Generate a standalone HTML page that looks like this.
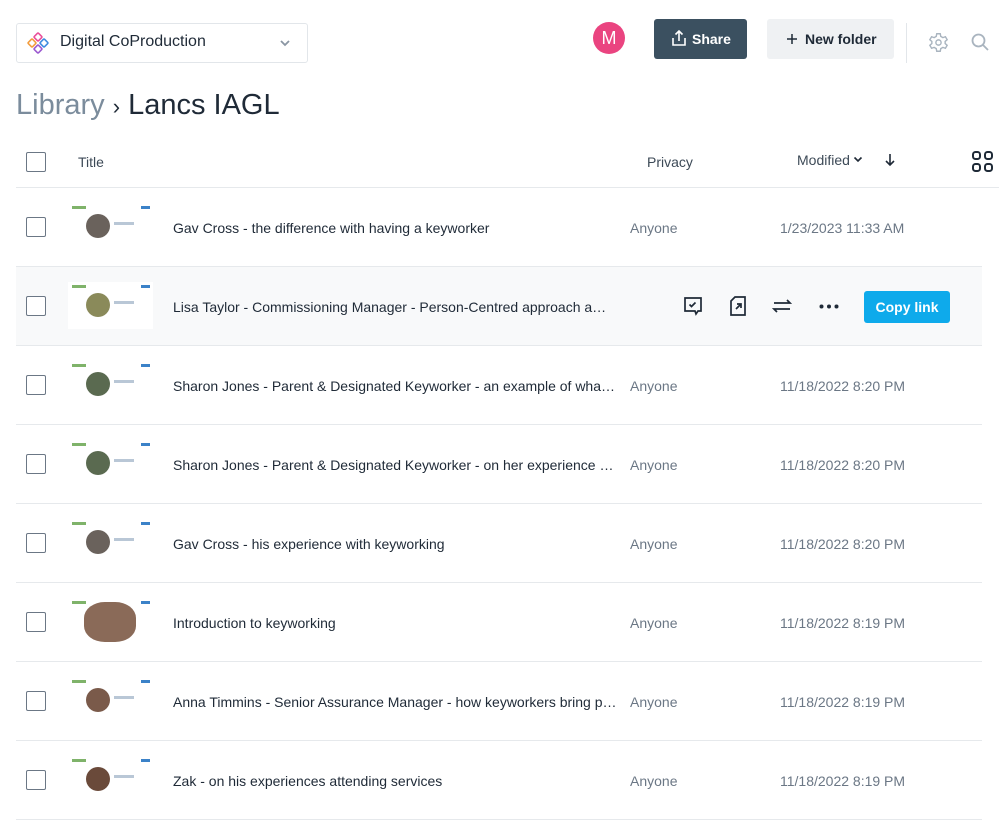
<!DOCTYPE html>
<html><head><style>
*{box-sizing:border-box;margin:0;padding:0}
body{width:1005px;height:821px;background:#fff;font-family:"Liberation Sans",Arial,sans-serif;color:#1f2a37;position:relative;overflow:hidden}
.abs{position:absolute}
.sel{left:16px;top:23px;width:292px;height:40px;border:1px solid #e2e6ea;border-radius:3px}
.cb{position:absolute;left:26px;width:20px;height:20px;border:1.5px solid #6b7785;border-radius:2px;background:#fff}
.row{position:absolute;left:16px;width:966px;height:79px;border-bottom:1px solid #e6e9ec}
.thumb{position:absolute;left:52px;top:15px;width:85px;height:47px;background:#fff}
.thumb:before{content:"";position:absolute;left:4px;top:3px;width:14px;height:3px;background:#7fb36a}
.thumb:after{content:"";position:absolute;right:3px;top:3px;width:9px;height:3px;background:#3b82c8}
.av{position:absolute;left:18px;top:11px;width:24px;height:24px;border-radius:50%}
.av+i{position:absolute;left:46px;top:19px;width:20px;height:3px;background:#b9c7d6}
.title{position:absolute;left:157px;top:32px;font-size:14px;color:#1f2a37;white-space:nowrap;width:445px;overflow:hidden;text-overflow:ellipsis}
.priv{position:absolute;left:614px;top:32px;font-size:14px;color:#6b7785}
.date{position:absolute;left:764px;top:32px;font-size:14px;color:#6b7785}
</style></head><body>
<div class="abs sel">
<svg class="abs" style="left:10px;top:8px" width="22" height="22" viewBox="0 0 22 22" fill="none" stroke-width="1.6"><rect x="8" y="2" width="6" height="6" rx="1" transform="rotate(45 11 5)" stroke="#e94e9a"/><rect x="2" y="8" width="6" height="6" rx="1" transform="rotate(45 5 11)" stroke="#f39c3c"/><rect x="14" y="8" width="6" height="6" rx="1" transform="rotate(45 17 11)" stroke="#3d8be0"/><rect x="8" y="14" width="6" height="6" rx="1" transform="rotate(45 11 17)" stroke="#9b59d0"/></svg>
<div class="abs" style="left:43px;top:9px;font-size:16px;color:#1f2a37">Digital CoProduction</div>
<svg class="abs" style="left:262px;top:15px" width="12" height="8" viewBox="0 0 12 8"><path d="M2 2l4 4 4-4" stroke="#8a96a3" stroke-width="1.8" fill="none"/></svg>
</div>
<div class="abs" style="left:593px;top:22px;width:32px;height:32px;border-radius:50%;background:#ea4480;color:#fff;font-size:18px;text-align:center;line-height:32px">M</div>
<div class="abs" style="left:654px;top:19px;width:93px;height:40px;background:#3b5060;border-radius:3px;color:#fff;font-weight:bold;font-size:14px;line-height:40px;padding-left:38px">Share</div>
<svg class="abs" style="left:671px;top:29px" width="16" height="18" viewBox="0 0 16 18" fill="none" stroke="#fff" stroke-width="1.6"><path d="M8 12V2M4.5 5.5L8 2l3.5 3.5M2 9v7h12V9"/></svg>
<div class="abs" style="left:767px;top:19px;width:127px;height:40px;background:#eff1f3;border-radius:3px;color:#1f2a37;font-weight:bold;font-size:14px;line-height:40px;padding-left:38px">New folder</div>
<svg class="abs" style="left:786px;top:33px" width="12" height="12" viewBox="0 0 12 12" stroke="#1f2a37" stroke-width="1.5"><path d="M6 1v10M1 6h10"/></svg>
<div class="abs" style="left:906px;top:23px;width:1px;height:40px;background:#e2e6ea"></div>
<svg class="abs" style="left:928px;top:32px" width="21" height="21" viewBox="0 0 24 24" fill="none" stroke="#a9b4bf" stroke-width="1.6"><circle cx="12" cy="12" r="3"/><path d="M10 2h4l.6 3 2.4 1.4 2.9-1 2 3.4-2.3 2v2.4l2.3 2-2 3.4-2.9-1L14.6 19 14 22h-4l-.6-3-2.4-1.4-2.9 1-2-3.4 2.3-2v-2.4l-2.3-2 2-3.4 2.9 1L9.4 5z"/></svg>
<svg class="abs" style="left:970px;top:32px" width="20" height="20" viewBox="0 0 20 20" fill="none" stroke="#a9b4bf" stroke-width="1.8"><circle cx="8.5" cy="8.5" r="6"/><path d="M13 13l5 5"/></svg>
<div class="abs" style="left:16px;top:89px;font-size:29px;color:#7b8c9c">Library <span style="color:#1f2a37;font-size:22px">›</span> <span style="color:#1f2a37">Lancs IAGL</span></div>
<div class="cb" style="top:152px"></div>
<div class="abs" style="left:78px;top:154px;font-size:14px;color:#3d4a57">Title</div>
<div class="abs" style="left:647px;top:154px;font-size:14px;color:#3d4a57">Privacy</div>
<div class="abs" style="left:797px;top:152px;font-size:14px;color:#3d4a57">Modified</div>
<svg class="abs" style="left:853px;top:156px" width="10" height="7" viewBox="0 0 10 7"><path d="M1.5 1.5L5 5l3.5-3.5" stroke="#1f2a37" stroke-width="1.6" fill="none"/></svg>
<svg class="abs" style="left:884px;top:153px" width="12" height="14" viewBox="0 0 12 14" fill="none" stroke="#1f2a37" stroke-width="1.6"><path d="M6 1v11M2 8l4 4 4-4"/></svg>
<svg class="abs" style="left:972px;top:151px" width="21" height="21" viewBox="0 0 21 21" fill="none" stroke="#1f2a37" stroke-width="2"><rect x="1" y="1" width="7" height="7" rx="2.5"/><rect x="13" y="1" width="7" height="7" rx="2.5"/><rect x="1" y="13" width="7" height="7" rx="2.5"/><rect x="13" y="13" width="7" height="7" rx="2.5"/></svg>
<div class="abs" style="left:16px;top:187px;width:983px;height:1px;background:#e6e9ec"></div>

<div class="row" style="top:188px"><div class="thumb"><div class="av" style="background:#6a625c"></div><i></i></div><div class="title">Gav Cross - the difference with having a keyworker</div><div class="priv">Anyone</div><div class="date">1/23/2023 11:33 AM</div></div>
<div class="row" style="top:267px;background:#f8f9fa"><div class="thumb"><div class="av" style="background:#8a8a5a"></div><i></i></div><div class="title" style="width:440px">Lisa Taylor - Commissioning Manager - Person-Centred approach and keyworking</div>
<svg class="abs" style="left:667px;top:29px" width="20" height="20" viewBox="0 0 20 20" fill="none" stroke="#1f2a37" stroke-width="1.7"><path d="M2 2h16v13h-3l-2 3-1-3H2z"/><path d="M6.5 8.5l2 2 4-4"/></svg>
<svg class="abs" style="left:713px;top:28px" width="18" height="22" viewBox="0 0 18 22" fill="none" stroke="#1f2a37" stroke-width="1.7"><path d="M6 2h10v18H2V6z"/><path d="M7 14l5-5M8 9h4v4"/></svg>
<svg class="abs" style="left:756px;top:31px" width="20" height="16" viewBox="0 0 20 16" fill="none" stroke="#1f2a37" stroke-width="1.7"><path d="M2 5h16l-3-3M18 11H2l3 3"/></svg>
<svg class="abs" style="left:803px;top:37px" width="20" height="5" viewBox="0 0 20 5" fill="#1f2a37"><circle cx="2.5" cy="2.5" r="2"/><circle cx="10" cy="2.5" r="2"/><circle cx="17.5" cy="2.5" r="2"/></svg>
<div class="abs" style="left:848px;top:24px;width:86px;height:32px;background:#0eaaeb;border-radius:3px;color:#fff;font-weight:bold;font-size:14px;text-align:center;line-height:32px">Copy link</div></div>
<div class="row" style="top:346px"><div class="thumb"><div class="av" style="background:#5a6a50"></div><i></i></div><div class="title">Sharon Jones - Parent &amp; Designated Keyworker - an example of what keyworking can do</div><div class="priv">Anyone</div><div class="date">11/18/2022 8:20 PM</div></div>
<div class="row" style="top:425px"><div class="thumb"><div class="av" style="background:#5a6a50"></div><i></i></div><div class="title">Sharon Jones - Parent &amp; Designated Keyworker - on her experience of keyworking</div><div class="priv">Anyone</div><div class="date">11/18/2022 8:20 PM</div></div>
<div class="row" style="top:504px"><div class="thumb"><div class="av" style="background:#6a625c"></div><i></i></div><div class="title">Gav Cross - his experience with keyworking</div><div class="priv">Anyone</div><div class="date">11/18/2022 8:20 PM</div></div>
<div class="row" style="top:583px"><div class="thumb"><div class="abs" style="left:16px;top:4px;width:52px;height:40px;border-radius:40%;background:#8a6a58"></div></div><div class="title">Introduction to keyworking</div><div class="priv">Anyone</div><div class="date">11/18/2022 8:19 PM</div></div>
<div class="row" style="top:662px"><div class="thumb"><div class="av" style="background:#7a5a4a"></div><i></i></div><div class="title">Anna Timmins - Senior Assurance Manager - how keyworkers bring people together</div><div class="priv">Anyone</div><div class="date">11/18/2022 8:19 PM</div></div>
<div class="row" style="top:741px"><div class="thumb"><div class="av" style="background:#6a4a3a"></div><i></i></div><div class="title">Zak - on his experiences attending services</div><div class="priv">Anyone</div><div class="date">11/18/2022 8:19 PM</div></div>

<div class="cb" style="top:217px"></div><div class="cb" style="top:296px"></div><div class="cb" style="top:375px"></div><div class="cb" style="top:454px"></div><div class="cb" style="top:533px"></div><div class="cb" style="top:612px"></div><div class="cb" style="top:691px"></div><div class="cb" style="top:770px"></div>
</body></html>
